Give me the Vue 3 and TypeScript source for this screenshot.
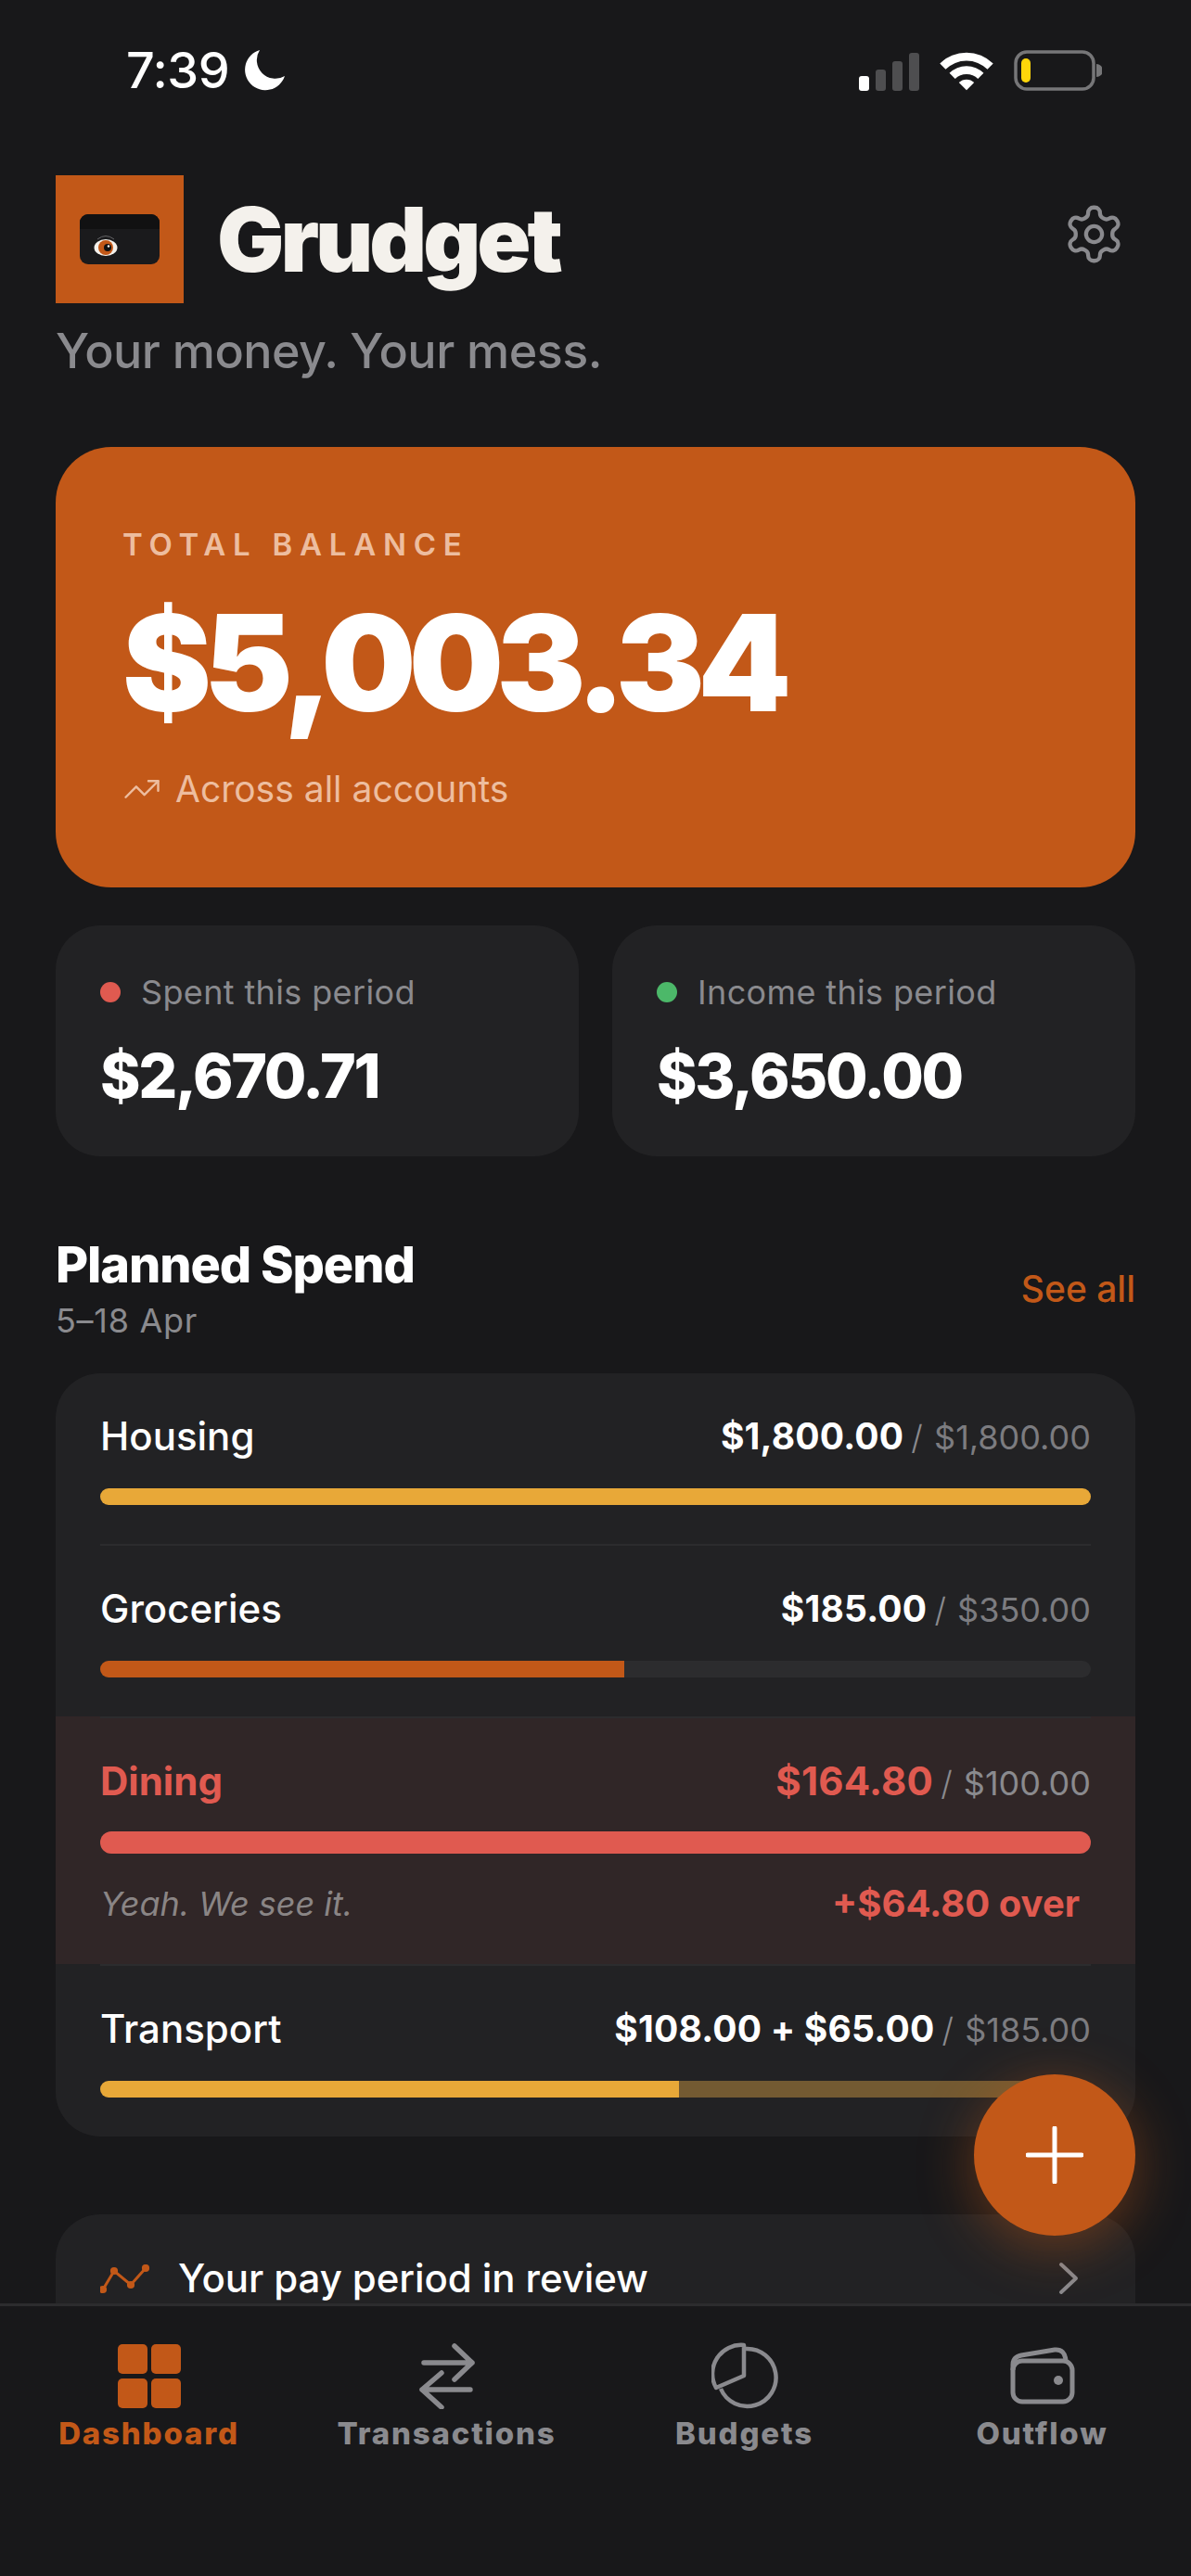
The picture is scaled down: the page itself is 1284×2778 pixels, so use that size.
<script setup lang="ts">
interface BudgetRow {
  name: string
  spent: string
  extra?: string
  limit: string
  color: string
  width: number
  pending?: number
  over?: string
  note?: string
}

const rows: BudgetRow[] = [
  { name: 'Housing', spent: '$1,800.00', limit: '$1,800.00', color: '#e8a838', width: 100 },
  { name: 'Groceries', spent: '$185.00', limit: '$350.00', color: '#c25818', width: 52.9 },
  {
    name: 'Dining',
    spent: '$164.80',
    limit: '$100.00',
    color: '#e05a50',
    width: 100,
    over: '+$64.80 over',
    note: 'Yeah. We see it.',
  },
  {
    name: 'Transport',
    spent: '$108.00',
    extra: ' + $65.00',
    limit: '$185.00',
    color: '#e8a838',
    width: 58.4,
    pending: 41.6,
  },
]

const signalBars = [
  { h: 16, on: true },
  { h: 23, on: false },
  { h: 32, on: false },
  { h: 41, on: false },
]
</script>

<template>
  <div class="phone">
    <div class="status">
      <div class="status-left">
        <span class="time">7:39</span>
        <svg width="44" height="44" viewBox="0 0 44 44"><path d="M17 0A22 22 0 1 0 44 28 A20 20 0 0 1 17 0Z" fill="#fff" /></svg>
      </div>
      <div class="status-right">
        <div class="signal">
          <span
            v-for="(bar, i) in signalBars"
            :key="i"
            class="sig-bar"
            :class="{ on: bar.on }"
            :style="{ height: bar.h + 'px' }"
          ></span>
        </div>
        <svg class="wifi" width="58" height="42" viewBox="-1 0 60 42" fill="#fff">
          <path d="M-.7 12.3A42 42 0 0 1 58.7 12.3L52.3 18.7A33 33 0 0 0 5.7 18.7Z" />
          <path d="M9.9 22.9A27 27 0 0 1 48.1 22.9L41.7 29.3A18 18 0 0 0 16.3 29.3Z" />
          <path d="M20.5 33.5A12 12 0 0 1 37.5 33.5L29 42Z" />
        </svg>
        <svg width="95" height="44" viewBox="0 0 95 44">
          <rect x="2" y="2" width="84" height="40" rx="12" fill="none" stroke="#767678" stroke-width="3.5" />
          <rect x="8" y="9" width="10" height="26" rx="5" fill="#ffd60a" />
          <path d="M89 15a7 7 0 0 1 0 14Z" fill="#767678" />
        </svg>
      </div>
    </div>

    <main class="content">
      <header class="brand">
        <div class="logo">
          <svg width="86" height="54" viewBox="0 0 86 54">
            <rect width="86" height="54" rx="9" fill="#1a1a1c" />
            <path d="M0 16V9a9 9 0 0 1 9-9h68a9 9 0 0 1 9 9v7Z" fill="#111112" />
            <path d="M19 27q9-7 18 0" fill="none" stroke="#77777a" stroke-width=".8" />
            <ellipse cx="28" cy="36" rx="12.5" ry="9" fill="#f4f1ec" />
            <circle cx="28" cy="36" r="8" fill="#c25818" />
            <circle cx="30" cy="36" r="4" fill="#111" />
            <circle cx="31" cy="34.5" r="1.2" fill="#fff" />
          </svg>
        </div>
        <h1 class="title">Grudget</h1>
        <svg class="gear" width="69" height="69" viewBox="0 0 24 24" fill="none" stroke="#8a8a8e" stroke-width="1.5" stroke-linecap="round" stroke-linejoin="round">
          <path d="M12.22 2h-.44a2 2 0 0 0-2 2v.18a2 2 0 0 1-1 1.73l-.43.25a2 2 0 0 1-2 0l-.15-.08a2 2 0 0 0-2.73.73l-.22.38a2 2 0 0 0 .73 2.73l.15.1a2 2 0 0 1 1 1.72v.51a2 2 0 0 1-1 1.74l-.15.09a2 2 0 0 0-.73 2.73l.22.38a2 2 0 0 0 2.73.73l.15-.08a2 2 0 0 1 2 0l.43.25a2 2 0 0 1 1 1.73V20a2 2 0 0 0 2 2h.44a2 2 0 0 0 2-2v-.18a2 2 0 0 1 1-1.73l.43-.25a2 2 0 0 1 2 0l.15.08a2 2 0 0 0 2.73-.73l.22-.39a2 2 0 0 0-.73-2.73l-.15-.08a2 2 0 0 1-1-1.74v-.5a2 2 0 0 1 1-1.74l.15-.09a2 2 0 0 0 .73-2.73l-.22-.38a2 2 0 0 0-2.73-.73l-.15.08a2 2 0 0 1-2 0l-.43-.25a2 2 0 0 1-1-1.73V4a2 2 0 0 0-2-2z" />
          <circle cx="12" cy="12" r="3" />
        </svg>
      </header>
      <p class="tagline">Your money. Your mess.</p>

      <section class="hero">
        <div class="hero-label">TOTAL BALANCE</div>
        <div class="hero-amount">$5,003.34</div>
        <div class="hero-foot">
          <svg width="42" height="42" viewBox="0 0 24 24" fill="none" stroke="currentColor" stroke-width="1.4" stroke-linecap="round" stroke-linejoin="round">
            <path d="M22 7l-8.5 8.5-5-5L2 17" />
            <path d="M16 7h6v6" />
          </svg>
          <span>Across all accounts</span>
        </div>
      </section>

      <div class="stats">
        <div class="stat">
          <div class="stat-label"><i class="dot red"></i>Spent this period</div>
          <div class="stat-value">$2,670.71</div>
        </div>
        <div class="stat">
          <div class="stat-label"><i class="dot green"></i>Income this period</div>
          <div class="stat-value">$3,650.00</div>
        </div>
      </div>

      <div class="section-head">
        <div>
          <h2>Planned Spend</h2>
          <div class="period">5–18 Apr</div>
        </div>
        <a class="see-all">See all</a>
      </div>

      <section class="budget-card">
        <div
          v-for="row in rows"
          :key="row.name"
          class="budget-row"
          :class="{ over: row.over }"
        >
          <div class="row-top">
            <span class="row-name">{{ row.name }}</span>
            <span class="row-nums"><b>{{ row.spent }}{{ row.extra }}</b> <em>/</em> <span class="limit">{{ row.limit }}</span></span>
          </div>
          <div class="track">
            <div class="fill" :style="{ width: row.width + '%', background: row.color }"></div>
            <div v-if="row.pending" class="fill pending" :style="{ width: row.pending + '%' }"></div>
          </div>
          <div v-if="row.over" class="row-note">
            <span class="note">{{ row.note }}</span>
            <span class="over-amt">{{ row.over }}</span>
          </div>
        </div>
      </section>

      <section class="review">
        <svg class="review-icon" width="54" height="32" viewBox="0 0 54 32" fill="none" stroke="#c25818" stroke-width="3">
          <path d="M3 27L15 7L33 22L49 4" />
          <circle cx="3" cy="27" r="2.6" fill="#c25818" />
          <circle cx="15" cy="7" r="2.6" fill="#c25818" />
          <circle cx="33" cy="22" r="2.6" fill="#c25818" />
          <circle cx="49" cy="4" r="2.6" fill="#c25818" />
        </svg>
        <span class="review-text">Your pay period in review</span>
        <svg class="chev" width="24" height="36" viewBox="0 0 24 36" fill="none" stroke="#8a8a8e" stroke-width="4" stroke-linecap="round" stroke-linejoin="round">
          <path d="M4 3L20 18L4 33" />
        </svg>
      </section>
    </main>

    <button class="fab" type="button" aria-label="Add">
      <svg width="62" height="62" viewBox="0 0 62 62" stroke="#fff" stroke-width="5" stroke-linecap="round">
        <path d="M31 2V60M2 31H60" />
      </svg>
    </button>

    <nav class="tabs">
      <div class="tab active">
        <svg width="72" height="72" viewBox="0 0 72 72" fill="#c25818">
          <rect x="2" y="2" width="32" height="32" rx="5" />
          <rect x="38" y="2" width="32" height="32" rx="5" />
          <rect x="2" y="39" width="32" height="32" rx="5" />
          <rect x="38" y="39" width="32" height="32" rx="5" />
        </svg>
        <span>Dashboard</span>
      </div>
      <div class="tab">
        <svg width="72" height="72" viewBox="0 0 72 72" fill="none" stroke="#8a8a8e" stroke-width="5.5" stroke-linecap="round" stroke-linejoin="round">
          <path d="M11 22H63M44 4L63 22L44 40" />
          <path d="M61 51H9M30 33L9 51L30 70" />
        </svg>
        <span>Transactions</span>
      </div>
      <div class="tab">
        <svg width="72" height="72" viewBox="0 0 72 72" fill="none" stroke="#8a8a8e" stroke-width="4.5" stroke-linejoin="round">
          <path d="M37 7A31 31 0 1 1 10 50" />
          <path d="M35 3A31 31 0 0 0 5 49L35 36Z" />
        </svg>
        <span>Budgets</span>
      </div>
      <div class="tab">
        <svg width="72" height="72" viewBox="0 0 72 72" fill="none" stroke="#8a8a8e" stroke-width="5" stroke-linejoin="round">
          <rect x="4" y="20" width="64" height="44" rx="10" />
          <path d="M4 30V24Q4 16 13 14L49 8Q60 7 61 20" />
          <circle cx="53" cy="41" r="5" fill="#8a8a8e" stroke="none" />
        </svg>
        <span>Outflow</span>
      </div>
    </nav>
  </div>
</template>

<style>
html,
body {
  margin: 0;
  background: #18181a;
}
</style>

<style scoped>
.phone {
  position: relative;
  width: 1284px;
  height: 2778px;
  display: flex;
  flex-direction: column;
  overflow: hidden;
  background: #18181a;
  color: #fff;
  font-family: Inter, "Liberation Sans", sans-serif;
}

.status {
  flex: none;
  height: 150px;
  box-sizing: border-box;
  padding: 54px 96px 0 136px;
  display: flex;
  justify-content: space-between;
  align-items: flex-start;
}
.status-left {
  display: flex;
  align-items: center;
  gap: 16px;
}
.time {
  font-size: 54px;
  line-height: 44px;
  font-weight: 500;
  letter-spacing: -0.01em;
}
.status-right {
  display: flex;
  align-items: flex-end;
  gap: 22px;
}
.signal {
  display: flex;
  align-items: flex-end;
  gap: 7px;
  height: 42px;
}
.sig-bar {
  width: 11px;
  border-radius: 3px;
  background: #4e4e50;
}
.sig-bar.on {
  background: #fff;
}

.content {
  flex: 1;
  min-height: 0;
  overflow: hidden;
  padding: 39px 60px 0;
}

.brand {
  display: flex;
  align-items: center;
  height: 138px;
}
.logo {
  width: 138px;
  height: 138px;
  background: #c25818;
  display: flex;
  align-items: center;
  justify-content: center;
}
.title {
  margin: 0 0 0 36px;
  font-size: 96px;
  font-weight: 900;
  letter-spacing: -0.042em;
  color: #f4f1ec;
}
.gear {
  margin-left: auto;
  margin-right: 10px;
  margin-top: -12px;
}
.tagline {
  margin: 19px 0 0;
  font-size: 52px;
  line-height: 66px;
  font-weight: 500;
  letter-spacing: -0.01em;
  color: #8a8a8e;
}

.hero {
  margin-top: 70px;
  height: 475px;
  box-sizing: border-box;
  padding: 87px 72px 0;
  background: #c25818;
  border-radius: 60px;
}
.hero-label {
  font-size: 33px;
  line-height: 36px;
  font-weight: 600;
  letter-spacing: 0.235em;
  color: #edbd9f;
}
.hero-amount {
  margin-top: 32px;
  font-size: 144px;
  line-height: 156px;
  font-weight: 900;
  letter-spacing: -0.055em;
}
.hero-foot {
  margin-top: 34px;
  display: flex;
  align-items: center;
  gap: 15px;
  font-size: 39px;
  line-height: 48px;
  color: #edbd9f;
}

.stats {
  margin-top: 41px;
  display: grid;
  grid-template-columns: 1fr 1fr;
  gap: 36px;
}
.stat {
  height: 249px;
  box-sizing: border-box;
  padding: 48px 48px 0;
  background: #222224;
  border-radius: 48px;
}
.stat-label {
  display: flex;
  align-items: center;
  gap: 22px;
  font-size: 36px;
  line-height: 48px;
  letter-spacing: 0.01em;
  color: #8a8a8e;
}
.dot {
  width: 22px;
  height: 22px;
  border-radius: 50%;
}
.dot.red {
  background: #e05a50;
}
.dot.green {
  background: #4cb869;
}
.stat-value {
  margin-top: 26px;
  font-size: 66px;
  line-height: 80px;
  font-weight: 800;
  letter-spacing: -0.035em;
}

.section-head {
  margin-top: 84px;
  display: flex;
  justify-content: space-between;
  align-items: center;
}
.section-head h2 {
  margin: 0;
  font-size: 54px;
  line-height: 66px;
  font-weight: 800;
  letter-spacing: -0.02em;
}
.period {
  margin-top: 6px;
  font-size: 36px;
  line-height: 42px;
  letter-spacing: 0.02em;
  color: #8a8a8e;
}
.see-all {
  font-size: 39px;
  line-height: 48px;
  font-weight: 500;
  color: #c25818;
  margin-top: 4px;
}

.budget-card {
  margin-top: 36px;
  background: #222224;
  border-radius: 48px;
  overflow: hidden;
}
.budget-row {
  position: relative;
  box-sizing: border-box;
  padding: 39px 48px 42px;
}
.budget-row:first-child {
  padding-top: 37px;
}
.budget-row + .budget-row::before {
  content: "";
  position: absolute;
  left: 48px;
  right: 48px;
  top: 0;
  height: 2px;
  background: #2c2c2e;
}
.budget-row.over {
  background: #302627;
  padding-bottom: 41px;
}
.row-top {
  display: flex;
  justify-content: space-between;
  align-items: center;
  height: 60px;
}
.row-name {
  font-size: 42px;
  font-weight: 500;
}
.row-nums {
  font-size: 36px;
  color: #8a8a8e;
  white-space: pre-wrap;
}
.row-nums b {
  font-size: 39px;
  font-weight: 700;
  letter-spacing: 0.005em;
  color: #fff;
}
.row-nums em {
  font-style: normal;
  font-weight: 300;
  margin: 0 2px 0 -2px;
}
.limit {
  font-weight: 400;
  color: #7c7c80;
}
.over .row-name,
.over .row-nums b {
  color: #e05a50;
  font-weight: 700;
}
.over .row-nums b {
  font-size: 42px;
}
.over .limit {
  color: #8a8a8e;
}
.track {
  margin-top: 27px;
  height: 18px;
  display: flex;
  overflow: hidden;
  border-radius: 9px;
  background: #2c2c2e;
}
.over .track {
  margin-top: 25px;
  height: 24px;
  border-radius: 12px;
}
.fill {
  height: 100%;
}
.fill.pending {
  background: #735a32;
}
.row-note {
  margin-top: 29px;
  padding-right: 12px;
  display: flex;
  justify-content: space-between;
  align-items: center;
}
.note {
  font-size: 36px;
  font-style: italic;
  color: #8a8585;
}
.over-amt {
  font-size: 40px;
  font-weight: 700;
  color: #e05a50;
}

.review {
  margin-top: 84px;
  height: 180px;
  box-sizing: border-box;
  padding: 46px 60px 0 48px;
  display: flex;
  align-items: flex-start;
  gap: 30px;
  background: #222224;
  border-radius: 48px;
}
.review-icon {
  margin-top: 8px;
}
.review-text {
  font-size: 42px;
  line-height: 46px;
  font-weight: 500;
  letter-spacing: -0.002em;
}
.chev {
  margin-left: auto;
  margin-top: 5px;
}

.fab {
  position: absolute;
  right: 60px;
  bottom: 367px;
  width: 174px;
  height: 174px;
  padding: 0;
  border: 0;
  border-radius: 50%;
  display: flex;
  align-items: center;
  justify-content: center;
  background: #c25818;
  box-shadow: 0 12px 60px rgba(194, 88, 24, 0.45);
}

.tabs {
  flex: none;
  height: 294px;
  box-sizing: border-box;
  border-top: 3px solid #2c2c2e;
  padding-top: 39px;
  display: grid;
  grid-template-columns: repeat(4, 321px);
  background: #18181a;
  position: relative;
}
.tab {
  display: flex;
  flex-direction: column;
  align-items: center;
  color: #8a8a8e;
  font-size: 33px;
  line-height: 40px;
  font-weight: 800;
  letter-spacing: 0.055em;
}
.tab span {
  margin-top: 6px;
}
.tab.active {
  color: #c25818;
}
</style>
